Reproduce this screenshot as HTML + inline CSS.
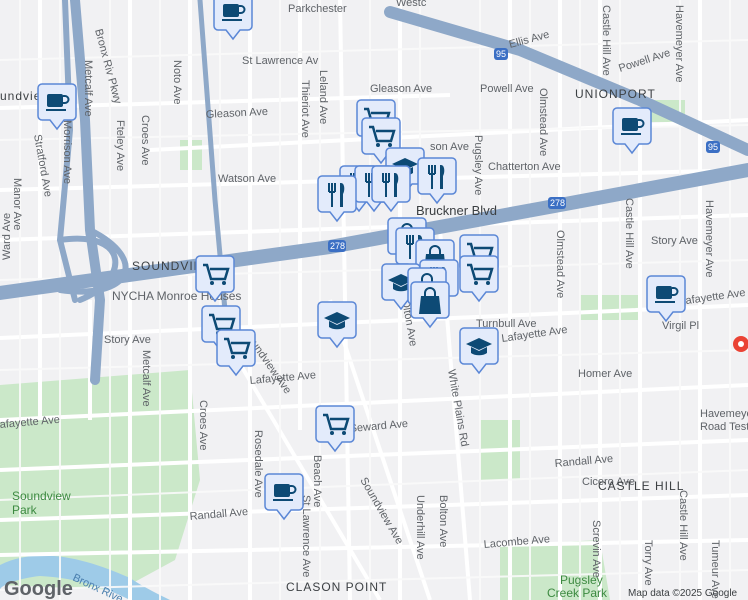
<!DOCTYPE html>
<html><head><meta charset="utf-8"><style>
html,body{margin:0;padding:0;width:748px;height:600px;overflow:hidden;background:#f1f1f3}
svg{display:block}
text{font-family:"Liberation Sans",sans-serif;font-size:11px;fill:#5f6368}
.n{font-size:12px;fill:#3c4043;letter-spacing:1px}
</style></head><body>
<svg width="748" height="600" viewBox="0 0 748 600">
<defs>
<g id="mk">
<path d="M4 0h30a4 4 0 0 1 4 4v28a4 4 0 0 1-4 4h-8l-7 9l-7-9h-8a4 4 0 0 1-4-4v-28a4 4 0 0 1 4-4z" fill="#e3ebfb" stroke="#5b87d6" stroke-width="1.5"/>
</g>
<g id="cart"><use href="#mk"/><path d="M7 9h4l4 14h14l3-10h-18" fill="none" stroke="#0d4a75" stroke-width="2.5"/><circle cx="16" cy="27" r="2" fill="#0d4a75"/><circle cx="28" cy="27" r="2" fill="#0d4a75"/></g>
<g id="cup"><use href="#mk"/><rect x="9" y="10" width="16" height="13" rx="2" fill="#0d4a75"/><path d="M25 12h2a3 3 0 0 1 0 7h-2" fill="none" stroke="#0d4a75" stroke-width="2"/><rect x="8" y="25" width="20" height="2" fill="#0d4a75"/></g>
<g id="fork"><use href="#mk"/><path d="M11 7v9m3-9v9m3-9v9M11 16h6M14 16v15" stroke="#0d4a75" stroke-width="2" fill="none"/><path d="M23 7c4 0 4 8 2 11v13h-3V7z" fill="#0d4a75"/></g>
<g id="cap"><use href="#mk"/><path d="M6 16l13-6l13 6l-13 6z" fill="#0d4a75"/><path d="M11 19v6c4 3 12 3 16 0v-6l-8 4z" fill="#0d4a75"/></g>
<g id="bag"><use href="#mk"/><path d="M10 14h18l2 18H8z" fill="#0d4a75"/><path d="M14 15v-4a5 5 0 0 1 10 0v4" fill="none" stroke="#0d4a75" stroke-width="2"/></g>
</defs>
<!-- parks -->
<path d="M0 385L190 370L200 480L175 560L120 590L0 585Z" fill="#cbe8c9"/>
<rect x="480" y="420" width="40" height="60" fill="#cbe8c9"/>
<path d="M500 545L600 540L610 600L500 600Z" fill="#cbe8c9"/>
<rect x="180" y="140" width="22" height="30" fill="#cbe8c9"/>
<rect x="580" y="295" width="60" height="25" fill="#cbe8c9"/>
<rect x="645" y="100" width="40" height="22" fill="#cbe8c9"/>
<!-- water -->
<path d="M0 565C40 545 90 560 130 578C145 588 160 595 170 600H130C110 590 80 578 40 576C20 578 0 585 0 590Z" fill="#9ecbe8"/>
<!-- streets -->
<g stroke="#ffffff" stroke-width="4" fill="none">
<path d="M0 108L450 95M0 190L748 170M0 338L748 305M0 420L748 385M0 470L748 440M0 520L748 495M0 555L748 540M150 150L748 120M0 240L748 215"/>
<path d="M130 0V600M190 0V600M250 0V600M300 0V430M340 0L350 600M400 0V600M440 230L470 600M510 0V600M560 0V600M600 0V600M640 120V600M700 0V600M40 0V420M90 300V420M330 300L430 600M220 330L380 600"/>
</g>
<g stroke="#fafafa" stroke-width="2" fill="none" opacity=".9">
<path d="M0 60L748 40M0 140L748 125M0 280L748 260M0 370L748 350M0 500L748 470M0 590L748 570M20 0V600M60 0V600M110 0V600M160 0V600M220 0V330M280 0V600M320 0V600M370 0V600M420 0V230M480 0V600M530 0V600M580 0V600M620 0V600M680 0V600M730 0V600"/>
</g>
<!-- highways -->
<g stroke="#8ea8c8" fill="none" stroke-linecap="round">
<path d="M0 293L330 247L560 205L748 170" stroke-width="14"/>
<path d="M75 0L85 120L90 230L100 300L95 380" stroke-width="10"/>
<path d="M65 0L70 130L60 240L75 300" stroke-width="6"/>
<path d="M390 12L520 50L640 100L748 150" stroke-width="12"/>
<path d="M200 0L215 200L225 310" stroke-width="5"/>
<path d="M60 240C130 230 130 280 80 300M90 230C150 260 130 300 60 290" stroke-width="6"/>
</g>
<!-- shields -->
<g font-size="9"><rect x="328" y="240" width="18" height="12" rx="3" fill="#3b6fc4"/><text x="330" y="249" style="fill:#fff;font-size:9px">278</text>
<rect x="548" y="197" width="18" height="12" rx="3" fill="#3b6fc4"/><text x="550" y="206" style="fill:#fff;font-size:9px">278</text>
<rect x="494" y="48" width="14" height="12" rx="3" fill="#3b6fc4"/><text x="496" y="57" style="fill:#fff;font-size:9px">95</text>
<rect x="706" y="141" width="14" height="12" rx="3" fill="#3b6fc4"/><text x="708" y="150" style="fill:#fff;font-size:9px">95</text></g>
<!-- labels -->
<text x="288" y="12">Parkchester</text><text x="396" y="6">Westc</text>
<text x="242" y="64">St Lawrence Av</text>
<text x="510" y="48" transform="rotate(-15 510 48)">Ellis Ave</text>
<text x="620" y="72" transform="rotate(-18 620 72)">Powell Ave</text>
<text x="480" y="92">Powell Ave</text>
<text x="370" y="92">Gleason Ave</text>
<text x="206" y="118" transform="rotate(-3 206 118)">Gleason Ave</text>
<text x="218" y="182">Watson Ave</text>
<text x="430" y="150">son Ave</text>
<text x="488" y="170">Chatterton Ave</text>
<text x="416" y="215" style="font-size:13px;fill:#3c4043">Bruckner Blvd</text>
<text x="651" y="244">Story Ave</text>
<text x="104" y="343">Story Ave</text>
<text x="476" y="327">Turnbull Ave</text>
<text x="502" y="342" transform="rotate(-8 502 342)">Lafayette Ave</text>
<text x="680" y="305" transform="rotate(-8 680 305)">Lafayette Ave</text>
<text x="662" y="329">Virgil Pl</text>
<text x="250" y="384" transform="rotate(-5 250 384)">Lafayette Ave</text>
<text x="0" y="428" transform="rotate(-5 0 428)">afayette Ave</text>
<text x="578" y="377">Homer Ave</text>
<text x="350" y="432" transform="rotate(-5 350 432)">Seward Ave</text>
<text x="555" y="467" transform="rotate(-5 555 467)">Randall Ave</text>
<text x="190" y="520" transform="rotate(-5 190 520)">Randall Ave</text>
<text x="582" y="485">Cicero Ave</text>
<text x="545" y="495" transform="rotate(-5 545 495)"></text>
<text x="484" y="548" transform="rotate(-5 484 548)">Lacombe Ave</text>
<text x="700" y="417">Havemeyer B</text><text x="700" y="430">Road Test</text>
<text class="n" x="575" y="98">UNIONPORT</text>
<text class="n" x="132" y="270">SOUNDVIEW</text>
<text class="n" x="0" y="100">undview</text>
<text class="n" x="598" y="490">CASTLE HILL</text>
<text class="n" x="286" y="591">CLASON POINT</text>
<text x="112" y="300" style="font-size:12px">NYCHA Monroe Houses</text>
<text x="12" y="500" style="font-size:12px;fill:#3d8a41">Soundview</text><text x="12" y="514" style="font-size:12px;fill:#3d8a41">Park</text>
<text x="560" y="584" style="font-size:12px;fill:#3d8a41">Pugsley</text><text x="547" y="597" style="font-size:12px;fill:#3d8a41">Creek Park</text>
<text x="72" y="580" transform="rotate(25 72 580)" style="fill:#4a7fae">Bronx Rive</text>
<g font-size="11">
<text transform="translate(85,60) rotate(90)">Metcalf Ave</text>
<text transform="translate(95,30) rotate(75)">Bronx Riv Pkwy</text>
<text transform="translate(174,60) rotate(90)">Noto Ave</text>
<text transform="translate(142,115) rotate(90)">Croes Ave</text>
<text transform="translate(117,120) rotate(90)">Fteley Ave</text>
<text transform="translate(64,120) rotate(90)">Morrison Ave</text>
<text transform="translate(34,135) rotate(80)">Stratford Ave</text>
<text transform="translate(14,178) rotate(90)">Manor Ave</text>
<text transform="translate(10,260) rotate(-90)">Ward Ave</text>
<text transform="translate(302,80) rotate(90)">Thieriot Ave</text>
<text transform="translate(320,70) rotate(90)">Leland Ave</text>
<text transform="translate(475,135) rotate(90)">Pugsley Ave</text>
<text transform="translate(540,88) rotate(90)">Olmstead Ave</text>
<text transform="translate(557,230) rotate(90)">Olmstead Ave</text>
<text transform="translate(603,5) rotate(90)">Castle Hill Ave</text>
<text transform="translate(626,198) rotate(90)">Castle Hill Ave</text>
<text transform="translate(676,5) rotate(90)">Havemeyer Ave</text>
<text transform="translate(706,200) rotate(90)">Havemeyer Ave</text>
<text transform="translate(448,370) rotate(80)">White Plains Rd</text>
<text transform="translate(402,300) rotate(80)">Olton Ave</text>
<text transform="translate(143,350) rotate(90)">Metcalf Ave</text>
<text transform="translate(200,400) rotate(90)">Croes Ave</text>
<text transform="translate(243,333) rotate(55)">Soundview Ave</text>
<text transform="translate(360,480) rotate(60)">Soundview Ave</text>
<text transform="translate(255,430) rotate(90)">Rosedale Ave</text>
<text transform="translate(314,455) rotate(90)">Beach Ave</text>
<text transform="translate(303,495) rotate(90)">St Lawrence Ave</text>
<text transform="translate(417,495) rotate(90)">Underhill Ave</text>
<text transform="translate(440,495) rotate(90)">Bolton Ave</text>
<text transform="translate(593,520) rotate(90)">Screvin Ave</text>
<text transform="translate(645,540) rotate(90)">Torry Ave</text>
<text transform="translate(680,490) rotate(90)">Castle Hill Ave</text>
<text transform="translate(712,540) rotate(90)">Tumeur Ave</text>
</g>
<!-- markers -->
<use href="#cup" x="214" y="-6"/>
<use href="#cup" x="38" y="84"/>
<use href="#cup" x="613" y="108"/>
<use href="#cup" x="647" y="276"/>
<use href="#cup" x="265" y="474"/>
<use href="#cart" x="357" y="100"/>
<use href="#cart" x="362" y="118"/>
<use href="#cap" x="386" y="148"/>
<use href="#fork" x="340" y="166"/>
<use href="#fork" x="355" y="166"/>
<use href="#fork" x="372" y="166"/>
<use href="#fork" x="418" y="158"/>
<use href="#fork" x="318" y="176"/>
<use href="#cart" x="196" y="256"/>
<use href="#cart" x="202" y="306"/>
<use href="#cart" x="217" y="330"/>
<use href="#cap" x="318" y="302"/>
<use href="#cart" x="316" y="406"/>
<use href="#bag" x="388" y="218"/>
<use href="#fork" x="396" y="228"/>
<use href="#bag" x="416" y="240"/>
<use href="#cart" x="460" y="235"/>
<use href="#cart" x="460" y="256"/>
<use href="#cap" x="382" y="264"/>
<use href="#fork" x="420" y="260"/>
<use href="#bag" x="408" y="268"/>
<use href="#bag" x="411" y="282"/>
<use href="#cap" x="460" y="328"/>
<circle cx="741" cy="344" r="8" fill="#ea4335"/><circle cx="741" cy="344" r="3" fill="#fff"/>
<text x="4" y="595" style="font-size:20px;fill:#5f6368;font-weight:bold">Google</text>
<text x="628" y="596" style="font-size:10px;fill:#3c4043">Map data ©2025 Google</text>
</svg>
</body></html>
